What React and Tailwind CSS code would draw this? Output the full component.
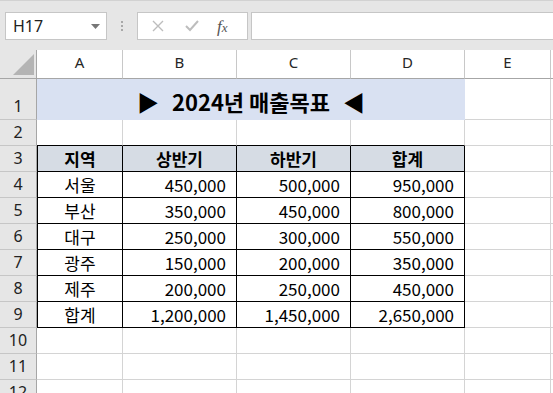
import React from "react";

const rows = [
  ["서울", "450,000", "500,000", "950,000"],
  ["부산", "350,000", "450,000", "800,000"],
  ["대구", "250,000", "300,000", "550,000"],
  ["광주", "150,000", "200,000", "350,000"],
  ["제주", "200,000", "250,000", "450,000"],
  ["합계", "1,200,000", "1,450,000", "2,650,000"],
];

const ui = { fontFamily: '"Noto Sans", "Open Sans", sans-serif' };
const kr = { fontFamily: '"Noto Sans CJK KR", "Noto Sans", sans-serif' };

function ColHead({ label }) {
  return (
    <div className="flex items-center justify-center pb-[3px] border-r border-b border-r-[#c8c8c8] border-b-[#a6a6a6] text-[15px] text-[#262626]">
      {label}
    </div>
  );
}

function RowHead({ n }) {
  return (
    <div className="flex items-end justify-center border-r border-b border-r-[#a6a6a6] border-b-[#c6c6c6] bg-[#e6e6e6] text-[16px] leading-[25px] text-[#222]">
      {n}
    </div>
  );
}

function Cell({ children, className = "" }) {
  return (
    <div className={"flex items-end border-r border-b border-[#d4d4d4] text-[17px] leading-[25px] text-black whitespace-nowrap " + className} style={kr}>
      {children}
    </div>
  );
}

export default function App() {
  return (
    <div className="w-[553px] h-[393px] overflow-hidden bg-white" style={ui}>
      {/* Formula bar */}
      <div className="h-[50px] bg-[#e6e6e6] border-t border-[#d2d2d2] flex items-start pt-[11px]">
        <div className="ml-[5px] w-[102px] h-[28px] bg-white border border-[#c6c6c6] flex items-center pl-[7px] pr-[6px] text-[16px] text-[#222]">
          <span className="flex-1">H17</span>
          <svg width="9" height="5" viewBox="0 0 9 5">
            <path d="M0 0 H9 L4.5 5 Z" fill="#777" />
          </svg>
        </div>
        <div className="w-[30px] h-[28px] flex flex-col items-center justify-center gap-[2px]">
          <span className="w-[2px] h-[2px] bg-[#a8a8a8]" />
          <span className="w-[2px] h-[2px] bg-[#a8a8a8]" />
          <span className="w-[2px] h-[2px] bg-[#a8a8a8]" />
        </div>
        <div className="w-[111px] h-[28px] bg-white border border-[#c6c6c6] flex items-center">
          <svg width="12" height="12" viewBox="0 0 12 12" className="ml-[14px]">
            <path d="M1 1 L11 11 M11 1 L1 11" stroke="#bdbdbd" strokeWidth="1.4" />
          </svg>
          <svg width="14" height="12" viewBox="0 0 14 12" className="ml-[21px]">
            <path d="M1 6 L5 10 L13 1" stroke="#bdbdbd" strokeWidth="2" fill="none" />
          </svg>
          <span className="ml-[18px] text-[17px] leading-none italic text-[#555]" style={{ fontFamily: '"Liberation Serif", serif' }}>
            f<span className="text-[13px]">x</span>
          </span>
        </div>
        <div className="ml-[3px] flex-1 h-[28px] bg-white border border-[#c6c6c6] border-r-0" />
      </div>

      {/* Sheet grid */}
      <div className="grid grid-cols-[37px_86px_114px_114px_114px_86px_1fr] grid-rows-[29px_41px_repeat(11,26px)]">
        <div className="relative border-r border-b border-r-[#a6a6a6] border-b-[#a6a6a6] bg-[#e6e6e6]">
          <svg width="21" height="21" viewBox="0 0 21 21" className="absolute left-[13px] top-[4px]">
            <path d="M21 0 V21 H0 Z" fill="#b4b4b4" />
          </svg>
        </div>
        {["A", "B", "C", "D", "E"].map((c) => (
          <ColHead key={c} label={c} />
        ))}
        <div className="border-b border-b-[#a6a6a6]" />

        {/* Row 1 */}
        <RowHead n={1} />
        <div className="col-span-4 bg-[#d9e1f2] flex items-center justify-center gap-[13px] pt-[3px] text-[22px] font-bold text-black" style={kr}>
          <span>▶</span>
          <span>2024년 매출목표</span>
          <span>◀</span>
        </div>
        <Cell />
        <Cell className="border-r-0" />

        {/* Row 2 */}
        <RowHead n={2} />
        <Cell className="border-b-black" />
        <Cell className="border-b-black" />
        <Cell className="border-b-black" />
        <Cell className="border-b-black" />
        <Cell />
        <Cell className="border-r-0" />

        {/* Row 3 header */}
        <RowHead n={3} />
        {["지역", "상반기", "하반기", "합계"].map((h, i) => (
          <Cell key={h} className={"bg-[#d6dce4] justify-center font-bold border-black " + (i === 0 ? "border-l" : "")}>
            {h}
          </Cell>
        ))}
        <Cell />
        <Cell className="border-r-0" />

        {rows.map((r, idx) => (
          <React.Fragment key={r[0]}>
            <RowHead n={idx + 4} />
            <Cell className="justify-center border-black border-l">{r[0]}</Cell>
            <Cell className="justify-end pr-[10px] border-black">{r[1]}</Cell>
            <Cell className="justify-end pr-[10px] border-black">{r[2]}</Cell>
            <Cell className="justify-end pr-[10px] border-black">{r[3]}</Cell>
            <Cell />
            <Cell className="border-r-0" />
          </React.Fragment>
        ))}

        {[10, 11, 12].map((n) => (
          <React.Fragment key={n}>
            <RowHead n={n} />
            <Cell />
            <Cell />
            <Cell />
            <Cell />
            <Cell />
            <Cell className="border-r-0" />
          </React.Fragment>
        ))}
      </div>
    </div>
  );
}
